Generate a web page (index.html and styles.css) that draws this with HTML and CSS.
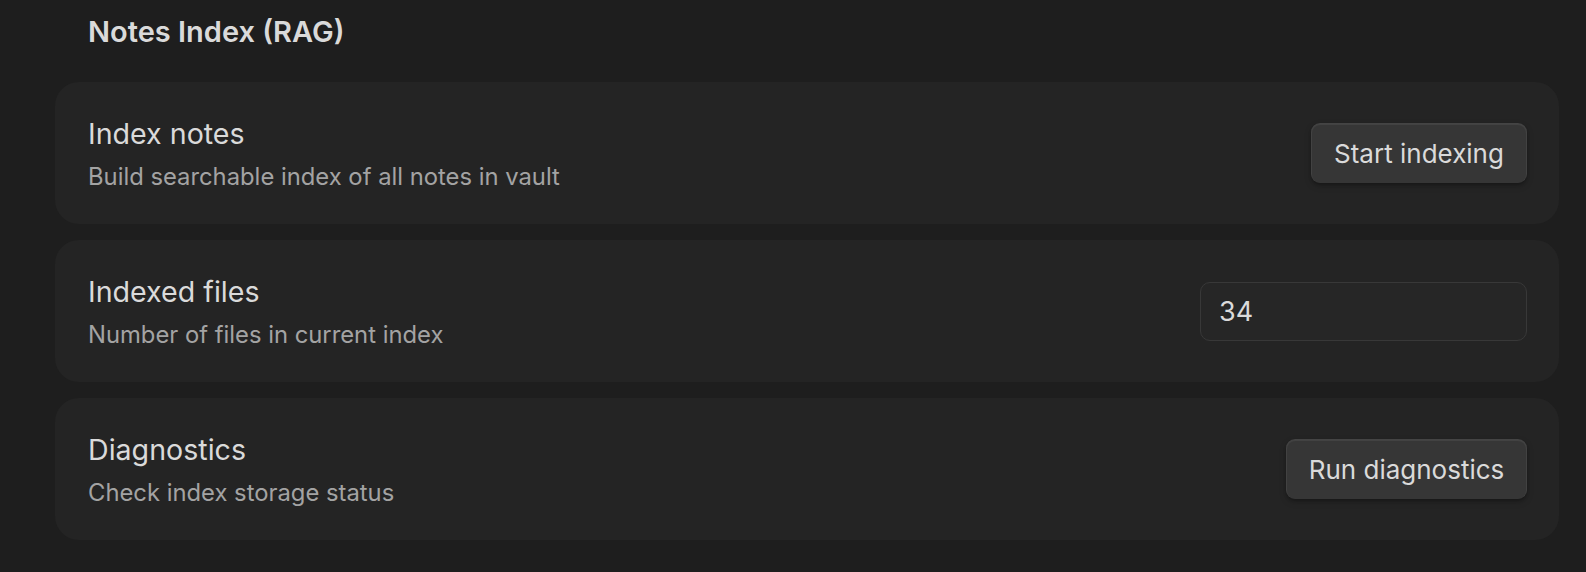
FILE: index.html
```html
<!DOCTYPE html>
<html lang="en">
<head>
<meta charset="utf-8">
<title>Notes Index (RAG)</title>
<link rel="stylesheet" href="styles.css">
</head>
<body>
<div class="settings">
  <h2 class="section-heading">Notes Index (RAG)</h2>
  <div class="setting-list">
    <div class="setting-item">
      <div class="setting-info">
        <div class="setting-name">Index notes</div>
        <div class="setting-desc">Build searchable index of all notes in vault</div>
      </div>
      <div class="setting-control">
        <button class="btn btn-index">Start indexing</button>
      </div>
    </div>
    <div class="setting-item">
      <div class="setting-info">
        <div class="setting-name">Indexed files</div>
        <div class="setting-desc">Number of files in current index</div>
      </div>
      <div class="setting-control">
        <input class="text-input" type="text" value="34" readonly>
      </div>
    </div>
    <div class="setting-item">
      <div class="setting-info">
        <div class="setting-name">Diagnostics</div>
        <div class="setting-desc">Check index storage status</div>
      </div>
      <div class="setting-control">
        <button class="btn btn-diag">Run diagnostics</button>
      </div>
    </div>
  </div>
</div>
</body>
</html>
```

FILE: styles.css
```css
html, body {
  margin: 0;
  padding: 0;
  background: #1e1e1e;
  height: 100%;
}

body {
  font-family: Inter, "Noto Sans", "Liberation Sans", sans-serif;
  color: #dadada;
}

.settings {
  padding: 14px 27px 0 55px;
}

.section-heading {
  margin: 0 0 32px 0;
  padding-left: 33px;
  font-size: 29px;
  line-height: 36px;
  font-weight: 600;
  color: #dadada;
}

.setting-list {
  display: flex;
  flex-direction: column;
  gap: 16px;
}

.setting-item {
  height: 142px;
  box-sizing: border-box;
  background: #242424;
  border-radius: 24px;
  padding: 0 32px 0 33px;
  display: flex;
  align-items: center;
  justify-content: space-between;
}

.setting-info {
  display: flex;
  flex-direction: column;
  padding-top: 4px;
}

.setting-name {
  font-size: 28.6px;
  line-height: 34px;
  color: #dadada;
}

.setting-desc {
  margin-top: 10px;
  font-size: 23.8px;
  line-height: 32px;
  color: #a3a3a3;
}

.btn {
  height: 60px;
  box-sizing: border-box;
  padding: 0;
  font-family: inherit;
  font-size: 26px;
  white-space: nowrap;
  text-align: center;
  color: #dadada;
  background: #363636;
  border: none;
  border-radius: 9px;
  box-shadow: inset 0 1px 1px 1px rgba(255,255,255,0.07), 0 3px 7px 0 rgba(0,0,0,0.18), 0 2px 3px 0 rgba(0,0,0,0.2);
}

.btn-index { width: 216px; }
.btn-diag { width: 241px; }

.text-input {
  width: 327px;
  height: 59px;
  box-sizing: border-box;
  padding: 0 18px;
  font-family: inherit;
  font-size: 27px;
  color: #dadada;
  background: #262626;
  border: 1.5px solid #383838;
  border-radius: 10px;
  outline: none;
}
```
